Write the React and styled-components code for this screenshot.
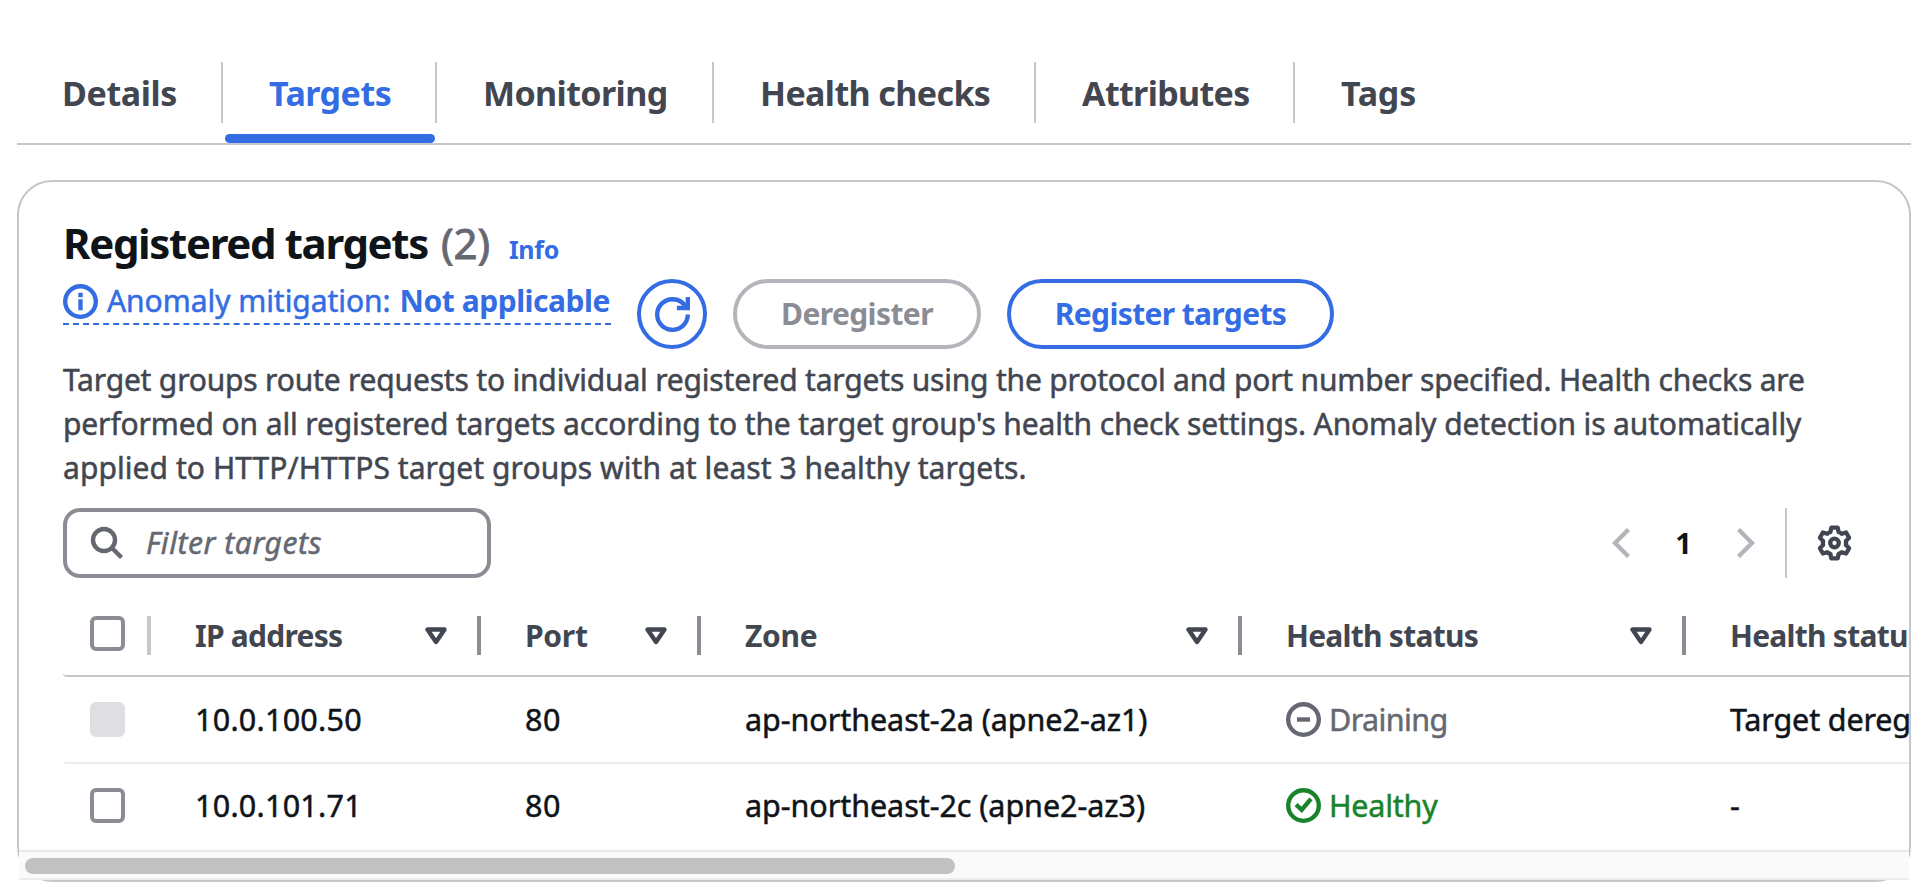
import React from 'react';
import styled, { createGlobalStyle, css } from 'styled-components';

const c = {
  blue: '#336ce3',
  text: '#0f141a',
  secondary: '#424650',
  muted: '#656871',
  control: '#8c8c94',
  disabled: '#b4b4bb',
  line: '#c6c6cd',
  rowLine: '#ebebf0',
  green: '#18842b',
};

const sturdy = css`
  -webkit-text-stroke: 0.5px currentColor;
`;

const GlobalStyle = createGlobalStyle`
  *, *::before, *::after { box-sizing: border-box; }
  body {
    margin: 0;
    background: #fff;
    color: ${c.text};
    font-family: "Noto Sans", "Open Sans", sans-serif;
    font-size: 30px;
    line-height: 44px;
    overflow: hidden;
  }
`;

const Page = styled.main`
  width: 1926px;
  height: 892px;
  padding: 50px 15px 0 17px;
  overflow: hidden;
`;

const TabBar = styled.nav`
  display: flex;
  height: 95px;
  border-bottom: 2px solid ${c.line};
`;

const Tab = styled.button`
  display: flex;
  flex: none;
  flex-direction: column;
  width: ${(p) => p.$width}px;
  height: 93px;
  padding: 12px 0 0;
  border: 0;
  background: none;
  color: ${(p) => (p.$active ? c.blue : c.secondary)};
  font: 700 34px/63px "Noto Sans", sans-serif;
  text-align: left;
`;

const TabLabel = styled.span`
  display: block;
  width: 100%;
  height: 61px;
  padding-left: ${(p) => p.$inset}px;
  border-right: ${(p) => (p.$last ? 0 : 2)}px solid ${c.line};
  letter-spacing: ${(p) => p.$spacing}px;
  white-space: nowrap;
`;

const TabMarker = styled.span`
  width: calc(100% - 4px);
  height: 9px;
  margin: 11px 2px 0;
  border-radius: 5px;
  background: ${c.blue};
`;

const Card = styled.section`
  display: flex;
  flex-direction: column;
  height: 702px;
  margin-top: 35px;
  border: 2px solid ${c.line};
  border-radius: 35px;
`;

const CardHeader = styled.header`
  height: 326px;
  padding: 31px 44px 0;
`;

const TitleRow = styled.div`
  display: flex;
  align-items: baseline;
  height: 62px;
`;

const Title = styled.h2`
  margin: 0;
  font-size: 42px;
  line-height: 60px;
  letter-spacing: ${(p) => p.$spacing}px;
  white-space: nowrap;
`;

const Counter = styled.span`
  margin-left: 13px;
  color: ${c.muted};
  font-size: 42px;
  line-height: 60px;
  letter-spacing: -0.1px;
  -webkit-text-stroke: 0.9px currentColor;
`;

const InfoLink = styled.a`
  margin-left: 19px;
  color: ${c.blue};
  font-size: 25px;
  font-weight: 700;
  letter-spacing: -0.3px;
`;

const ActionRow = styled.div`
  display: flex;
  height: 74px;
  padding-top: 4px;
`;

const Mitigation = styled.div`
  display: flex;
  align-items: center;
  width: 548px;
  height: 46px;
  border-bottom: 2px dashed ${c.blue};
  color: ${c.blue};
  white-space: nowrap;

  svg { flex: none; margin: 1px 9px 0 0; }
  span { letter-spacing: -0.05px; ${sturdy} }
  b { margin-left: 9px; letter-spacing: -0.47px; }
`;

const Button = styled.button`
  display: flex;
  flex: none;
  align-items: center;
  justify-content: center;
  width: ${(p) => p.$width}px;
  height: 70px;
  margin-left: 26px;
  padding: 0;
  border: 4px solid ${(p) => (p.$disabled ? c.disabled : c.blue)};
  border-radius: 35px;
  background: #fff;
  color: ${(p) => (p.$disabled ? c.control : c.blue)};
  font: 700 30px/44px "Noto Sans", sans-serif;
  letter-spacing: ${(p) => p.$spacing || 0}px;
  white-space: nowrap;
`;

const Description = styled.p`
  margin: 9px 0 0;
  color: ${c.secondary};
  line-height: 44px;
  ${sturdy}
`;

const DescriptionLine = styled.span`
  display: block;
  letter-spacing: ${(p) => p.$spacing}px;
  white-space: nowrap;
`;

const Toolbar = styled.div`
  display: flex;
  align-items: center;
  height: 70px;
  padding: 0 57px 0 44px;
`;

const Filter = styled.label`
  display: flex;
  align-items: center;
  width: 428px;
  height: 70px;
  padding-left: 23px;
  border: 4px solid ${c.control};
  border-radius: 17px;
  color: ${c.muted};
  font-style: italic;
  letter-spacing: 0.55px;
  ${sturdy}

  svg { margin-right: 22px; }
`;

const Pagination = styled.div`
  display: flex;
  align-items: center;
  height: 70px;
  margin-left: auto;
`;

const PageNumber = styled.b`
  width: 107px;
  font-size: 29px;
  text-align: center;
`;

const PaginationRule = styled.span`
  width: 2px;
  height: 70px;
  margin: 0 30px;
  background: ${c.line};
`;

const TableArea = styled.div`
  flex: 1;
  min-height: 0;
  padding-left: 44px;
  overflow: hidden;
`;

const Row = styled.div`
  display: grid;
  grid-template-columns: 88px 330px 220px 541px 444px 500px;
  align-items: center;
  width: 2200px;
  height: ${(p) => p.$height}px;
  padding: ${(p) => p.$padTop || 0}px 0 ${(p) => p.$padBottom || 0}px;
  border-bottom: ${(p) => (p.$line ? `2px solid ${p.$line}` : 0)};
  border-radius: 4px 0 0 4px;
`;

const HeadCell = styled.div`
  display: flex;
  align-items: center;
  height: 39px;
  padding-left: ${(p) => (p.$select ? 27 : 44)}px;
  border-right: 4px solid ${(p) => (p.$select ? c.line : c.control)};
  color: ${c.secondary};
  font-weight: 700;
  letter-spacing: ${(p) => p.$spacing || 0}px;
  white-space: nowrap;

  svg { margin: 0 30px 0 auto; }
`;

const HeadLabel = styled.span`
  padding-top: 1px;
`;

const Cell = styled.div`
  display: flex;
  align-items: center;
  padding-left: ${(p) => (p.$select ? 27 : 44)}px;
  font-size: 30.5px;
  letter-spacing: ${(p) => p.$spacing || 0}px;
  white-space: nowrap;
  ${sturdy}
`;

const Checkbox = styled.span`
  display: block;
  width: 35px;
  height: 35px;
  margin-bottom: ${(p) => p.$lift || 0}px;
  border: ${(p) => (p.$disabled ? 0 : 4)}px solid ${c.control};
  border-radius: 6px;
  background: ${(p) => (p.$disabled ? '#dedee3' : '#fff')};
`;

const Status = styled.span`
  display: flex;
  align-items: center;
  color: ${(p) => p.$color};

  svg { margin: 1px 8px 0 0; }
`;

const ScrollTrack = styled.div`
  flex: none;
  height: 30px;
  padding: 6px;
  border-top: 2px solid #e8e8e8;
  border-bottom: 2px solid #ededed;
  background: #fafafa;
`;

const ScrollThumb = styled.div`
  width: 930px;
  height: 16px;
  border-radius: 8px;
  background: #c1c1c1;
`;

const Icon = ({ size = 35, children, box = 16, height, stroke = 2 }) => (
  <svg
    width={size}
    height={height || size}
    viewBox={height ? `0 0 ${size} ${height}` : `0 0 ${box} ${box}`}
    fill="none"
    stroke="currentColor"
    strokeWidth={stroke}
  >
    {children}
  </svg>
);

const InfoIcon = () => (
  <Icon>
    <circle cx="8" cy="8" r="7" />
    <path d="M8 7v5M8 4v2" />
  </Icon>
);

const RefreshIcon = () => (
  <Icon>
    <path d="M15 8c0 3.87-3.13 7-7 7s-7-3.13-7-7 3.13-7 7-7c2.79 0 5.2 1.63 6.33 4" />
    <path d="M15 0v5h-5" />
  </Icon>
);

const SearchIcon = () => (
  <Icon size={34} height={34} stroke={4.4}>
    <circle cx="14" cy="14" r="11" />
    <path d="m22 22 9.500 9.500" />
  </Icon>
);

const SortIcon = () => (
  <Icon size={22} height={18} stroke={4.4}>
    <path d="M2.500 2.500h17L11 15z" strokeLinejoin="round" />
  </Icon>
);

const ChevronIcon = ({ flip }) => (
  <svg width="18" height="30" viewBox="0 0 18 30" fill="none" stroke={c.disabled} strokeWidth="4.400">
    <path d={flip ? 'M1.500 1.500 15 15 1.500 28.500' : 'M16.500 1.500 3 15l13.500 13.500'} />
  </svg>
);

const GearIcon = () => (
  <svg width="35" height="36" viewBox="0 0 35 36" fill="none" stroke={c.secondary} strokeWidth="4.300" strokeLinejoin="round">
    <path d="M14.300 2.600h6.400l.9 4.400q1.700.6 3.200 1.800l4.300-1.300 3 5.300-3.200 3.200q.3 2 0 4l3.200 3.200-3 5.300-4.300-1.300q-1.500 1.200-3.200 1.800l-.9 4.400h-6.400l-.9-4.400q-1.700-.6-3.200-1.800l-4.300 1.300-3-5.300 3.200-3.200q-.3-2 0-4l-3.200-3.200 3-5.300 4.300 1.300q1.500-1.200 3.200-1.800z" />
    <circle cx="17.500" cy="18" r="4.300" />
  </svg>
);

const DrainingIcon = () => (
  <Icon>
    <circle cx="8" cy="8" r="7" />
    <path d="M5 8h6" />
  </Icon>
);

const HealthyIcon = () => (
  <Icon>
    <circle cx="8" cy="8" r="7" />
    <path d="m4.600 7.600 2.600 2.400 4.200-5" />
  </Icon>
);

const tabs = [
  { label: 'Details', width: 206, inset: 45, spacing: -0.4 },
  { label: 'Targets', width: 214, inset: 46, spacing: -0.5, active: true },
  { label: 'Monitoring', width: 277, inset: 46, spacing: -0.6 },
  { label: 'Health checks', width: 322, inset: 46, spacing: -0.6 },
  { label: 'Attributes', width: 259, inset: 46, spacing: -0.65 },
  { label: 'Tags', width: 160, inset: 46, spacing: -0.2 },
];

const description = [
  { text: 'Target groups route requests to individual registered targets using the protocol and port number specified. Health checks are', spacing: -0.19 },
  { text: "performed on all registered targets according to the target group's health check settings. Anomaly detection is automatically", spacing: -0.125 },
  { text: 'applied to HTTP/HTTPS target groups with at least 3 healthy targets.', spacing: 0.07 },
];

const columns = [
  { label: 'IP address', spacing: -0.75 },
  { label: 'Port', spacing: -0.3 },
  { label: 'Zone', spacing: -0.3 },
  { label: 'Health status', spacing: -0.75 },
  { label: 'Health status details', spacing: -0.75 },
];

const targets = [
  { ip: '10.0.100.50', port: '80', zone: 'ap-northeast-2a (apne2-az1)', status: 'Draining', statusSpacing: -0.6, details: 'Target deregistration is in progress', disabled: true, height: 87, padBottom: 1, line: c.rowLine },
  { ip: '10.0.101.71', port: '80', zone: 'ap-northeast-2c (apne2-az3)', status: 'Healthy', statusSpacing: -0.25, details: '-', height: 86, padBottom: 4, line: null },
];

export default function App() {
  return (
    <Page>
      <GlobalStyle />
      <TabBar>
        {tabs.map((t, i) => (
          <Tab key={t.label} $width={t.width} $active={t.active}>
            <TabLabel $inset={t.inset} $spacing={t.spacing} $last={i === tabs.length - 1}>{t.label}</TabLabel>
            {t.active && <TabMarker />}
          </Tab>
        ))}
      </TabBar>
      <Card>
        <CardHeader>
          <TitleRow>
            <Title $spacing={-1.35}>Registered targets</Title>
            <Counter>(2)</Counter>
            <InfoLink>Info</InfoLink>
          </TitleRow>
          <ActionRow>
            <Mitigation>
              <InfoIcon />
              <span>Anomaly mitigation:</span>
              <b>Not applicable</b>
            </Mitigation>
            <Button $width={70} aria-label="Refresh"><RefreshIcon /></Button>
            <Button $width={248} $spacing={-0.6} $disabled>Deregister</Button>
            <Button $width={327} $spacing={-0.65}>Register targets</Button>
          </ActionRow>
          <Description>
            {description.map((l) => (
              <DescriptionLine key={l.text} $spacing={l.spacing}>{l.text}</DescriptionLine>
            ))}
          </Description>
        </CardHeader>
        <Toolbar>
          <Filter>
            <SearchIcon />
            Filter targets
          </Filter>
          <Pagination>
            <ChevronIcon />
            <PageNumber>1</PageNumber>
            <ChevronIcon flip />
            <PaginationRule />
            <GearIcon />
          </Pagination>
        </Toolbar>
        <TableArea>
          <Row $height={99} $line={c.line} $padTop={18}>
            <HeadCell $select><Checkbox $lift={4} /></HeadCell>
            {columns.map((col) => (
              <HeadCell key={col.label} $spacing={col.spacing}>
                <HeadLabel>{col.label}</HeadLabel>
                <SortIcon />
              </HeadCell>
            ))}
          </Row>
          {targets.map((t) => (
            <Row key={t.ip} $height={t.height} $line={t.line} $padBottom={t.padBottom}>
              <Cell $select><Checkbox $disabled={t.disabled} /></Cell>
              <Cell $spacing={0.25}>{t.ip}</Cell>
              <Cell $spacing={0.6}>{t.port}</Cell>
              <Cell $spacing={-0.06}>{t.zone}</Cell>
              <Cell $spacing={t.statusSpacing}>
                <Status $color={t.disabled ? c.muted : c.green}>
                  {t.disabled ? <DrainingIcon /> : <HealthyIcon />}
                  {t.status}
                </Status>
              </Cell>
              <Cell $spacing={-0.15}>{t.details}</Cell>
            </Row>
          ))}
        </TableArea>
        <ScrollTrack><ScrollThumb /></ScrollTrack>
      </Card>
    </Page>
  );
}
